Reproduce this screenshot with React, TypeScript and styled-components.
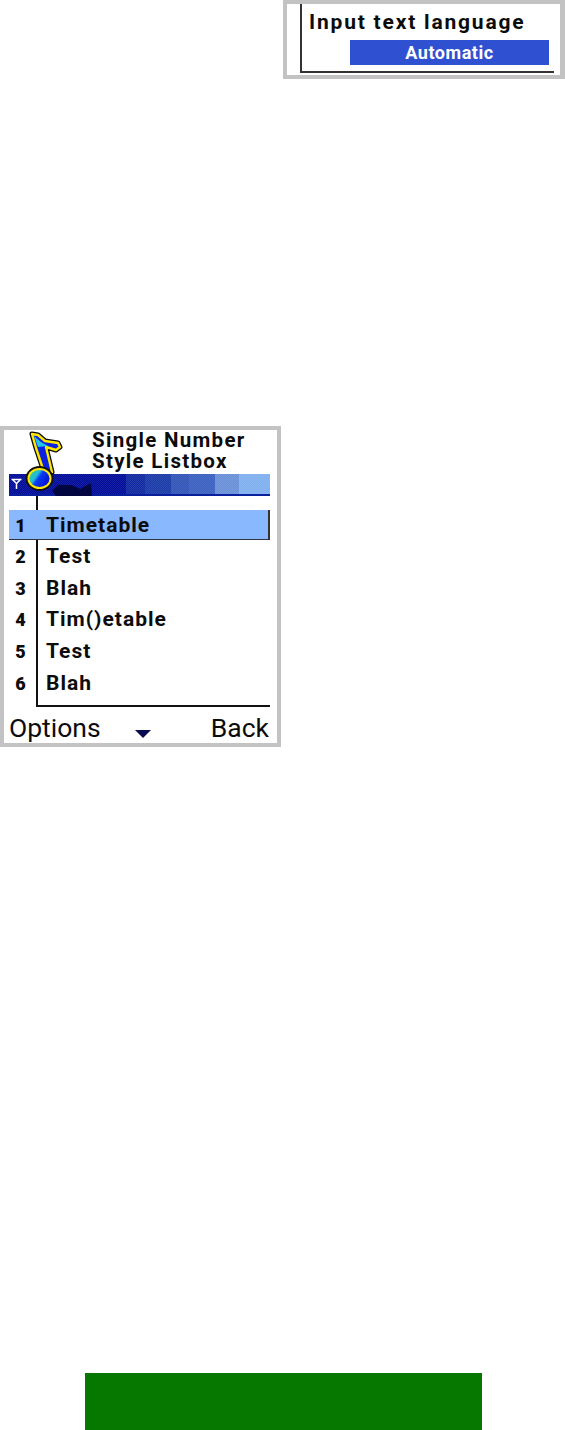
import styled, { createGlobalStyle } from 'styled-components';

const GlobalStyle = createGlobalStyle`
  html, body {
    margin: 0;
    padding: 0;
    background: #fff;
  }
`;

const Page = styled.div`
  width: 565px;
  height: 1430px;
  display: flex;
  flex-direction: column;
  font-family: Roboto, sans-serif;
  color: #0c0c0c;
`;

const TopRow = styled.div`
  display: flex;
  justify-content: flex-end;
  height: 426px;
`;

const Crop = styled.div`
  width: 282px;
  height: 79px;
  box-sizing: border-box;
  border: 4px solid #c3c3c3;
  border-right-width: 5px;
  background: #fff;
  display: flex;
  align-items: flex-start;
  padding-left: 13px;
`;

const CropBody = styled.div`
  flex: 1;
  height: 69px;
  margin-right: 6px;
  padding: 5px 0 0 7px;
  border-left: 2px solid #333;
  border-bottom: 2px solid #333;
  box-sizing: border-box;
  display: flex;
  flex-direction: column;
`;

const CropTitle = styled.div`
  font-size: 21px;
  line-height: 26px;
  font-weight: 700;
  letter-spacing: 1.8px;
`;

const Selected = styled.div`
  margin: 5px 5px 0 41px;
  height: 25px;
  background: #2f50d0;
  color: #fff;
  font-size: 18px;
  line-height: 26px;
  font-weight: 700;
  letter-spacing: 0.55px;
  text-align: center;
`;

const Phone = styled.div`
  position: relative;
  width: 281px;
  height: 321px;
  box-sizing: border-box;
  border: 4px solid #c3c3c3;
  background: #fff;
  display: flex;
  flex-direction: column;
`;

const TitleBlock = styled.div`
  height: 44px;
  padding-left: 88px;
  box-sizing: border-box;
  font-size: 20.5px;
  line-height: 21px;
  font-weight: 700;
  letter-spacing: 1.3px;
`;

const StatusBar = styled.div`
  margin: 0 7px 0 5px;
  height: 22px;
  box-sizing: border-box;
  border-bottom: 2px solid #0a1f9c;
  background-image: repeating-conic-gradient(rgba(255, 255, 255, 0.09) 0 25%, transparent 0 50%),
    linear-gradient(
      90deg,
      #000c99 0,
      #000c99 45%,
      #1029a0 45%,
      #1029a0 52%,
      #1a3aa8 52%,
      #1a3aa8 62%,
      #3355b8 62%,
      #3355b8 69%,
      #3a60c0 69%,
      #3a60c0 79%,
      #6a90d8 79%,
      #6a90d8 88%,
      #80b0ee 88%,
      #80b0ee 100%
    );
  background-size: 2px 2px, 100% 100%;
`;

const NoteOverlay = styled.svg`
  position: absolute;
  left: -4px;
  top: -4px;
  pointer-events: none;
`;

const ListArea = styled.div`
  margin: 0 7px 0 5px;
  flex: 1;
  display: flex;
  flex-direction: column;
`;

const ListSpacer = styled.div<{ $height: number; $closed?: boolean }>`
  height: ${(p) => p.$height}px;
  margin-left: 27px;
  border-left: 2px solid #111;
  border-bottom: ${(p) => (p.$closed ? '2px solid #111' : 'none')};
  box-sizing: border-box;
`;

const Row = styled.div<{ $active?: boolean }>`
  display: grid;
  grid-template-columns: 27px 1fr;
  height: ${(p) => (p.$active ? 30.5 : 31.7)}px;
  line-height: ${(p) => (p.$active ? 31 : 33)}px;
  background: ${(p) => (p.$active ? '#8ab8ff' : 'transparent')};
  border-right: ${(p) => (p.$active ? '2px solid #333' : 'none')};
  border-bottom: ${(p) => (p.$active ? '1px solid #334' : 'none')};
  box-sizing: border-box;
`;

const RowNumber = styled.div`
  padding-right: 4px;
  font-size: 18px;
  font-weight: 900;
  text-align: center;
`;

const RowText = styled.div<{ $active?: boolean }>`
  border-left: 2px solid ${(p) => (p.$active ? 'transparent' : '#111')};
  padding-left: 8px;
  font-size: 21px;
  font-weight: 700;
  letter-spacing: 1px;
`;

const SoftKeys = styled.div`
  flex-shrink: 0;
  margin: 0 8px 0 5px;
  padding-top: 5px;
  height: 36px;
  box-sizing: border-box;
  display: flex;
  align-items: center;
  justify-content: space-between;
  font-size: 26.5px;
  font-weight: 400;
`;

const SoftArrow = styled.svg`
  margin: 12px 26px 0 0;
`;

const Footer = styled.div`
  margin: auto 0 0 1px;
  align-self: center;
  width: 397px;
  height: 57px;
  background: #067800;
`;

const rows = ['Timetable', 'Test', 'Blah', 'Tim()etable', 'Test', 'Blah'];

const MusicNote = () => (
  <NoteOverlay width='110' height='80' viewBox='0 426 110 80'>
    <defs>
      <linearGradient id='head' x1='0' y1='0' x2='1' y2='0.6'>
        <stop offset='0' stopColor='#33cc88' />
        <stop offset='0.4' stopColor='#22bbdd' />
        <stop offset='0.55' stopColor='#0a3cf0' />
        <stop offset='1' stopColor='#0010d8' />
      </linearGradient>
    </defs>
    <path d='M52 491 L58 485 L72 485 L80 489 L91 483 L92 496 L56 496 Z' fill='#020640' />
    <path
      d='M32 434 L38 435 L45 441 L58 443 L60 447 L56 450 L46 447 L52 472 L44 472 L36 448 Z'
      fill='#0a0a0a'
      stroke='#0a0a0a'
      strokeWidth='5'
      strokeLinejoin='round'
    />
    <path
      d='M32 434 L38 435 L45 441 L58 443 L60 447 L56 450 L46 447 L52 472 L44 472 L36 448 Z'
      fill='#0a22e0'
      stroke='#ffe600'
      strokeWidth='2.4'
      strokeLinejoin='round'
    />
    <path d='M34 436 L41 442 L48 446 L38 447 Z' fill='#22c4e8' />
    <ellipse cx='39.5' cy='478.5' rx='14' ry='12.5' fill='#111' />
    <ellipse cx='39.5' cy='478.5' rx='12' ry='10.5' fill='#ffe600' />
    <ellipse cx='39.5' cy='478.5' rx='10' ry='8.5' fill='url(#head)' />
    <path
      d='M11.5 479.5 H21.5 M13 480 L16.5 483.5 L20 480 M16.5 483 V489'
      fill='none'
      stroke='#fff'
      strokeWidth='1.5'
    />
  </NoteOverlay>
);

const App = () => (
  <Page>
    <GlobalStyle />
    <TopRow>
      <Crop>
        <CropBody>
          <CropTitle>Input text language</CropTitle>
          <Selected>Automatic</Selected>
        </CropBody>
      </Crop>
    </TopRow>
    <Phone>
      <MusicNote />
      <TitleBlock>
        Single Number
        <br />
        Style Listbox
      </TitleBlock>
      <StatusBar />
      <ListArea>
        <ListSpacer $height={14} />
        {rows.map((label, index) => (
          <Row key={`${label}-${index}`} $active={index === 0}>
            <RowNumber>{index + 1}</RowNumber>
            <RowText $active={index === 0}>{label}</RowText>
          </Row>
        ))}
        <ListSpacer $height={8.5} $closed />
      </ListArea>
      <SoftKeys>
        <span>Options</span>
        <SoftArrow width='16' height='8' viewBox='0 0 16 8'>
          <path d='M0 0 H16 L8 8 Z' fill='#0a0a50' />
        </SoftArrow>
        <span>Back</span>
      </SoftKeys>
    </Phone>
    <Footer />
  </Page>
);

export default App;
